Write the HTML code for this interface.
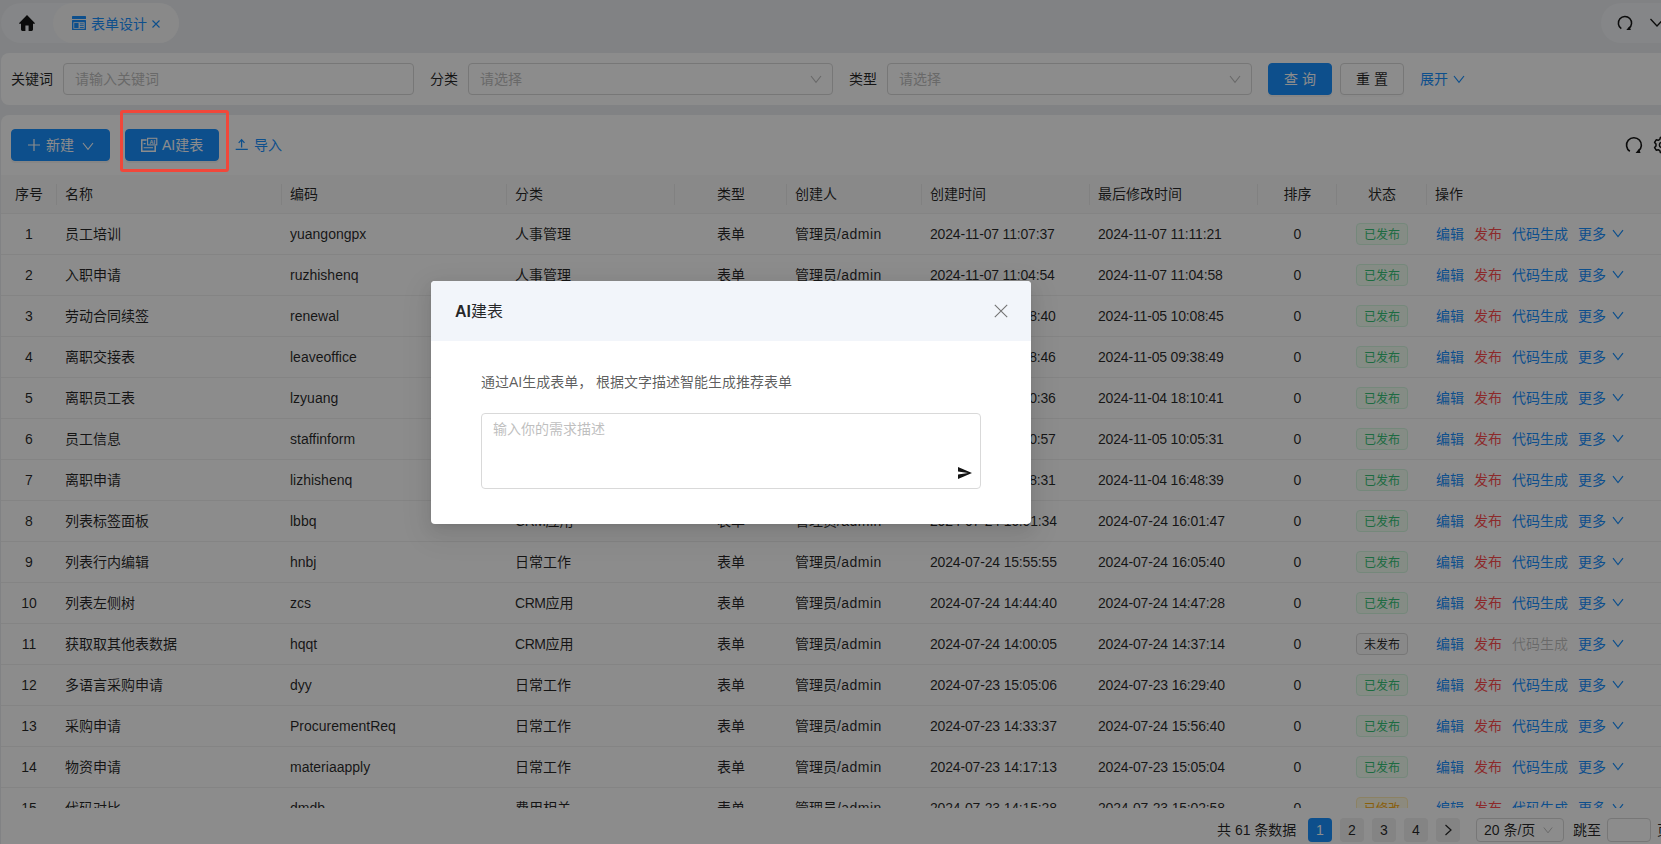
<!DOCTYPE html>
<html lang="zh-CN">
<head>
<meta charset="utf-8">
<title>表单设计</title>
<style>
*{box-sizing:border-box;margin:0;padding:0}
html,body{width:1661px;height:844px;overflow:hidden}
body{background:#ebedf0;font-family:"Liberation Sans","Noto Sans CJK SC",sans-serif;font-size:14px;color:rgba(0,0,0,.85);position:relative}
.abs{position:absolute}
/* tabs */
.tabs{left:1px;top:3px;width:178px;height:40px;border-radius:20px;background:#f2f4f7}
.tab-act{left:53px;top:3px;width:126px;height:40px;border-radius:20px;background:#f9f9f9}
.tab-txt{left:91px;top:4px;height:40px;line-height:41px;color:#1890ff;font-size:14px;white-space:nowrap}
.rpill{left:1601px;top:3px;width:100px;height:40px;border-radius:20px;background:#f2f4f7}
/* search panel */
.panel{background:#fff;border-radius:8px}
.sp{left:1px;top:53px;width:1700px;height:52px}
.lbl{top:63px;height:32px;line-height:32px;font-size:14px;color:rgba(0,0,0,.85);white-space:nowrap}
.inp{top:63px;height:32px;border:1px solid #d9d9d9;border-radius:4px;background:#fff;line-height:30px;padding-left:11px;color:#bfbfbf;font-size:14px;white-space:nowrap}
.btn{height:32px;border-radius:4px;line-height:30px;text-align:center;font-size:14px;white-space:nowrap}
.btn.pri{background:#1890ff;color:#fff;border:1px solid #1890ff;box-shadow:0 2px 0 rgba(0,0,0,.045)}
.btn.def{background:#fff;color:rgba(0,0,0,.85);border:1px solid #d9d9d9;box-shadow:0 2px 0 rgba(0,0,0,.015)}
.link{color:#1890ff}
/* table panel */
.tp{left:1px;top:115px;width:1700px;height:760px}
.tw{left:1px;top:175px;width:1691px;height:633px;overflow:hidden}
table{border-collapse:separate;border-spacing:0;table-layout:fixed;width:1691px}
th{height:39px;background:#fafafa;font-weight:normal;text-align:left;padding:0 8px 2px;border-bottom:1px solid #f0f0f0;position:relative;font-size:14px;color:rgba(0,0,0,.85);white-space:nowrap}
th:before{content:"";position:absolute;left:-1px;top:9px;height:21px;width:1px;background:rgba(0,0,0,.06)}
th:first-child:before{display:none}
td{height:41px;padding:0 8px;border-bottom:1px solid #f0f0f0;font-size:14px;color:rgba(0,0,0,.85);white-space:nowrap;overflow:hidden}
th.c,td.c{text-align:center}
td.z{padding-bottom:2px}
td.dt{letter-spacing:-.17px}
.ad{letter-spacing:.45px}
.crm{letter-spacing:-.45px}
.tag{display:inline-block;height:22px;line-height:20px;padding:1px 7px 0;font-size:12px;border-radius:4px;border:1px solid #d9d9d9;background:#fafafa;vertical-align:middle}
.tag.g{color:#36c377;background:#f2fff3;border-color:#d6f7e0}
.tag.w{color:#faad14;background:#fffbe6;border-color:#ffedb5}
.tag.d{color:rgba(0,0,0,.85)}
td.op{padding-left:9px;padding-bottom:2px}
td.op a{color:#1890ff;margin-right:10px}
td.op a.red{color:#ff4d4f}
td.op a.dis{color:rgba(0,0,0,.25)}
.cv{width:12px;height:12px;margin-left:6px;vertical-align:-1px;position:relative;top:-1px}
/* pagination */
.pg{top:818px;height:24px;line-height:24px;font-size:14px;white-space:nowrap}
.pi{top:818px;width:24px;height:24px;line-height:24px;text-align:center;border-radius:4px;background:#f0f0f0;color:rgba(0,0,0,.85);font-size:14px}
.pi.act{background:#1890ff;color:#fff}
/* mask & modal */
.mask{left:0;top:0;width:1661px;height:844px;background:rgba(0,0,0,.45)}
.redbox{left:120px;top:110px;width:109px;height:62px;border:3px solid #f1473a;border-radius:3px}
.modal{left:431px;top:281px;width:600px;height:243px;background:#fff;border-radius:4px;box-shadow:0 3px 6px -4px rgba(0,0,0,.12),0 6px 16px rgba(0,0,0,.08),0 9px 28px 8px rgba(0,0,0,.05);overflow:hidden}
.mh{left:0;top:0;width:600px;height:60px;background:#f2f5fa}
.mt{left:24px;top:0;height:60px;line-height:61px;font-size:16px;font-weight:normal;color:rgba(0,0,0,.85);white-space:nowrap}
.md{left:50px;top:90px;height:22px;line-height:22px;font-size:14px;color:rgba(0,0,0,.65);white-space:nowrap}
.ta{left:50px;top:132px;width:500px;height:76px;border:1px solid #d9d9d9;border-radius:4px;background:#fff;padding:4px 11px;line-height:22px;color:#bfbfbf;font-size:14px}
</style>
</head>
<body>
<!-- tab bar -->
<div class="abs tabs"></div>
<div class="abs tab-act"></div>
<svg class="abs" style="left:19px;top:15px" width="16" height="16" viewBox="0 0 16 16"><path d="M8 0 L0.2 8 Q-0.2 8.8 0.8 8.8 H2 V14.6 Q2 16 3.4 16 H6.4 V10.4 H9.6 V16 H12.6 Q14 16 14 14.6 V8.8 H15.2 Q16.2 8.8 15.8 8 Z" fill="#141414"/></svg>
<svg class="abs" style="left:72px;top:16px" width="14" height="14" viewBox="0 0 14 14"><rect x="0" y="0" width="14" height="3" rx=".6" fill="#1890ff"/><path d="M.6 4 H13.4 Q14 4 14 4.6 V13.4 Q14 14 13.4 14 H.6 Q0 14 0 13.4 V4.6 Q0 4 .6 4 Z M1.4 6.2 V12.7 H12.6 V6.2 Z" fill="#1890ff" fill-rule="evenodd"/><rect x="2.2" y="7.1" width="4.4" height="4.9" rx=".5" fill="#1890ff"/><rect x="7.8" y="7.4" width="4" height=".9" fill="#1890ff"/><rect x="7.8" y="9.2" width="4" height=".9" fill="#1890ff"/><rect x="7.8" y="11" width="4" height=".9" fill="#1890ff"/></svg>
<div class="abs tab-txt">表单设计</div>
<svg class="abs" style="left:152px;top:20px" width="8" height="8" viewBox="0 0 8 8"><path d="M.5 .5 L7.5 7.5 M7.5 .5 L.5 7.5" stroke="#1890ff" stroke-width="1.1" fill="none"/></svg>
<div class="abs rpill"></div>
<svg class="abs" style="left:1617px;top:15px" width="16" height="16" viewBox="0 0 16 16"><path d="M4.3 13.6 A6.6 6.6 0 1 1 11.9 13.4" fill="none" stroke="#141414" stroke-width="1.5"/><path d="M13.9 15.1 L9.3 15.1 L12.5 11.3 Z" fill="#141414"/></svg>
<svg class="abs" style="left:1650px;top:18px" width="14" height="10" viewBox="0 0 14 10"><path d="M.5 1 L7 8 L13.5 1" fill="none" stroke="#141414" stroke-width="1.3"/></svg>

<!-- search panel -->
<div class="abs panel sp"></div>
<div class="abs lbl" style="left:11px">关键词</div>
<div class="abs inp" style="left:63px;width:351px">请输入关键词</div>
<div class="abs lbl" style="left:430px">分类</div>
<div class="abs inp" style="left:468px;width:365px">请选择</div>
<svg class="abs" style="left:810px;top:73px" width="12" height="12" viewBox="0 0 12 12"><path d="M1 3 L6 9.4 L11 3" fill="none" stroke="#bfbfbf" stroke-width="1.1"/></svg>
<div class="abs lbl" style="left:849px">类型</div>
<div class="abs inp" style="left:887px;width:365px">请选择</div>
<svg class="abs" style="left:1229px;top:73px" width="12" height="12" viewBox="0 0 12 12"><path d="M1 3 L6 9.4 L11 3" fill="none" stroke="#bfbfbf" stroke-width="1.1"/></svg>
<div class="abs btn pri" style="left:1268px;top:63px;width:64px">查 询</div>
<div class="abs btn def" style="left:1340px;top:63px;width:64px">重 置</div>
<div class="abs lbl link" style="left:1420px">展开</div>
<svg class="abs" style="left:1453px;top:73px" width="12" height="12" viewBox="0 0 12 12"><path d="M1 3 L6 9.4 L11 3" fill="none" stroke="#1890ff" stroke-width="1.2"/></svg>

<!-- table panel -->
<div class="abs panel tp"></div>
<div class="abs btn pri" style="left:11px;top:129px;width:99px"></div>
<svg class="abs" style="left:28px;top:139px" width="12" height="12" viewBox="0 0 12 12"><path d="M6 0 V12 M0 6 H12" stroke="#fff" stroke-width="1.2" fill="none"/></svg>
<div class="abs" style="left:46px;top:129px;height:32px;line-height:32px;color:#fff;white-space:nowrap">新建</div>
<svg class="abs" style="left:82px;top:140px" width="12" height="12" viewBox="0 0 12 12"><path d="M1 3 L6 9.4 L11 3" fill="none" stroke="#fff" stroke-width="1.1"/></svg>
<div class="abs btn pri" style="left:125px;top:129px;width:94px"></div>
<svg class="abs" style="left:141px;top:137px" width="17" height="16" viewBox="0 0 17 16"><path d="M5.6 2.9 H.75 V14.2 H14.2 V8.6" fill="none" stroke="#fff" stroke-width="1.5"/><rect x="6.6" y="1.3" width="9.2" height="6.6" fill="none" stroke="#fff" stroke-width="1.1"/><path d="M2.6 6.6 H4.6 M2.6 10.7 H12" fill="none" stroke="#fff" stroke-width="1.1"/><text x="11.2" y="6.6" font-family="Liberation Sans,sans-serif" font-size="5.4" font-weight="bold" fill="#fff" text-anchor="middle">AI</text></svg>
<div class="abs" style="left:162px;top:129px;height:32px;line-height:32px;color:#fff;white-space:nowrap">AI建表</div>
<svg class="abs" style="left:235px;top:138px" width="14" height="13" viewBox="0 0 14 13"><path d="M6.6 9.5 V1.4 M3.7 4.8 L6.6 1.6 L9.5 4.8 M.7 11.4 H12.8" fill="none" stroke="#1890ff" stroke-width="1.25"/></svg>
<div class="abs link" style="left:254px;top:129px;height:32px;line-height:32px;white-space:nowrap">导入</div>
<svg class="abs" style="left:1625px;top:136px" width="18" height="18" viewBox="0 0 16 16"><path d="M4.3 13.6 A6.6 6.6 0 1 1 11.9 13.4" fill="none" stroke="#141414" stroke-width="1.45"/><path d="M13.8 15 L9.4 15 L12.5 11.4 Z" fill="#141414"/></svg>
<svg class="abs" style="left:1653px;top:136px" width="18" height="18" viewBox="0 0 18 18"><path d="M9 1.2 L10.6 1.4 L11.2 3.4 L12.8 4.3 L14.8 3.8 L16.4 6.4 L15 8 V10 L16.4 11.6 L14.8 14.2 L12.8 13.7 L11.2 14.6 L10.6 16.6 H7.4 L6.8 14.6 L5.2 13.7 L3.2 14.2 L1.6 11.6 L3 10 V8 L1.6 6.4 L3.2 3.8 L5.2 4.3 L6.8 3.4 L7.4 1.4 Z" fill="none" stroke="#141414" stroke-width="1.5" stroke-linejoin="round"/><circle cx="9" cy="9" r="2.6" fill="none" stroke="#141414" stroke-width="1.5"/></svg>

<div class="abs tw"><table>
<colgroup><col style="width:56px"><col style="width:225px"><col style="width:225px"><col style="width:168px"><col style="width:112px"><col style="width:135px"><col style="width:168px"><col style="width:168px"><col style="width:79px"><col style="width:90px"><col></colgroup>
<thead><tr><th class="c">序号</th><th>名称</th><th>编码</th><th>分类</th><th class="c">类型</th><th>创建人</th><th>创建时间</th><th>最后修改时间</th><th class="c">排序</th><th class="c">状态</th><th>操作</th></tr></thead>
<tbody>
<tr><td class="c">1</td><td class="z">员工培训</td><td>yuangongpx</td><td class="z">人事管理</td><td class="c z">表单</td><td class="z">管理员<span class="ad">/admin</span></td><td class="dt">2024-11-07 11:07:37</td><td class="dt">2024-11-07 11:11:21</td><td class="c">0</td><td class="c"><span class="tag g">已发布</span></td><td class="op"><a>编辑</a><a class="red">发布</a><a>代码生成</a><a class="more">更多<svg class="cv" viewBox="0 0 12 12"><path d="M1 3.2 L6 9.6 L11 3.2" fill="none" stroke="currentColor" stroke-width="1.2"/></svg></a></td></tr>
<tr><td class="c">2</td><td class="z">入职申请</td><td>ruzhishenq</td><td class="z">人事管理</td><td class="c z">表单</td><td class="z">管理员<span class="ad">/admin</span></td><td class="dt">2024-11-07 11:04:54</td><td class="dt">2024-11-07 11:04:58</td><td class="c">0</td><td class="c"><span class="tag g">已发布</span></td><td class="op"><a>编辑</a><a class="red">发布</a><a>代码生成</a><a class="more">更多<svg class="cv" viewBox="0 0 12 12"><path d="M1 3.2 L6 9.6 L11 3.2" fill="none" stroke="currentColor" stroke-width="1.2"/></svg></a></td></tr>
<tr><td class="c">3</td><td class="z">劳动合同续签</td><td>renewal</td><td class="z">人事管理</td><td class="c z">表单</td><td class="z">管理员<span class="ad">/admin</span></td><td class="dt">2024-11-05 10:08:40</td><td class="dt">2024-11-05 10:08:45</td><td class="c">0</td><td class="c"><span class="tag g">已发布</span></td><td class="op"><a>编辑</a><a class="red">发布</a><a>代码生成</a><a class="more">更多<svg class="cv" viewBox="0 0 12 12"><path d="M1 3.2 L6 9.6 L11 3.2" fill="none" stroke="currentColor" stroke-width="1.2"/></svg></a></td></tr>
<tr><td class="c">4</td><td class="z">离职交接表</td><td>leaveoffice</td><td class="z">人事管理</td><td class="c z">表单</td><td class="z">管理员<span class="ad">/admin</span></td><td class="dt">2024-11-05 09:38:46</td><td class="dt">2024-11-05 09:38:49</td><td class="c">0</td><td class="c"><span class="tag g">已发布</span></td><td class="op"><a>编辑</a><a class="red">发布</a><a>代码生成</a><a class="more">更多<svg class="cv" viewBox="0 0 12 12"><path d="M1 3.2 L6 9.6 L11 3.2" fill="none" stroke="currentColor" stroke-width="1.2"/></svg></a></td></tr>
<tr><td class="c">5</td><td class="z">离职员工表</td><td>lzyuang</td><td class="z">人事管理</td><td class="c z">表单</td><td class="z">管理员<span class="ad">/admin</span></td><td class="dt">2024-11-04 18:10:36</td><td class="dt">2024-11-04 18:10:41</td><td class="c">0</td><td class="c"><span class="tag g">已发布</span></td><td class="op"><a>编辑</a><a class="red">发布</a><a>代码生成</a><a class="more">更多<svg class="cv" viewBox="0 0 12 12"><path d="M1 3.2 L6 9.6 L11 3.2" fill="none" stroke="currentColor" stroke-width="1.2"/></svg></a></td></tr>
<tr><td class="c">6</td><td class="z">员工信息</td><td>staffinform</td><td class="z">人事管理</td><td class="c z">表单</td><td class="z">管理员<span class="ad">/admin</span></td><td class="dt">2024-11-04 17:50:57</td><td class="dt">2024-11-05 10:05:31</td><td class="c">0</td><td class="c"><span class="tag g">已发布</span></td><td class="op"><a>编辑</a><a class="red">发布</a><a>代码生成</a><a class="more">更多<svg class="cv" viewBox="0 0 12 12"><path d="M1 3.2 L6 9.6 L11 3.2" fill="none" stroke="currentColor" stroke-width="1.2"/></svg></a></td></tr>
<tr><td class="c">7</td><td class="z">离职申请</td><td>lizhishenq</td><td class="z">人事管理</td><td class="c z">表单</td><td class="z">管理员<span class="ad">/admin</span></td><td class="dt">2024-11-04 16:48:31</td><td class="dt">2024-11-04 16:48:39</td><td class="c">0</td><td class="c"><span class="tag g">已发布</span></td><td class="op"><a>编辑</a><a class="red">发布</a><a>代码生成</a><a class="more">更多<svg class="cv" viewBox="0 0 12 12"><path d="M1 3.2 L6 9.6 L11 3.2" fill="none" stroke="currentColor" stroke-width="1.2"/></svg></a></td></tr>
<tr><td class="c">8</td><td class="z">列表标签面板</td><td>lbbq</td><td class="z"><span class="crm">CRM</span>应用</td><td class="c z">表单</td><td class="z">管理员<span class="ad">/admin</span></td><td class="dt">2024-07-24 16:01:34</td><td class="dt">2024-07-24 16:01:47</td><td class="c">0</td><td class="c"><span class="tag g">已发布</span></td><td class="op"><a>编辑</a><a class="red">发布</a><a>代码生成</a><a class="more">更多<svg class="cv" viewBox="0 0 12 12"><path d="M1 3.2 L6 9.6 L11 3.2" fill="none" stroke="currentColor" stroke-width="1.2"/></svg></a></td></tr>
<tr><td class="c">9</td><td class="z">列表行内编辑</td><td>hnbj</td><td class="z">日常工作</td><td class="c z">表单</td><td class="z">管理员<span class="ad">/admin</span></td><td class="dt">2024-07-24 15:55:55</td><td class="dt">2024-07-24 16:05:40</td><td class="c">0</td><td class="c"><span class="tag g">已发布</span></td><td class="op"><a>编辑</a><a class="red">发布</a><a>代码生成</a><a class="more">更多<svg class="cv" viewBox="0 0 12 12"><path d="M1 3.2 L6 9.6 L11 3.2" fill="none" stroke="currentColor" stroke-width="1.2"/></svg></a></td></tr>
<tr><td class="c">10</td><td class="z">列表左侧树</td><td>zcs</td><td class="z"><span class="crm">CRM</span>应用</td><td class="c z">表单</td><td class="z">管理员<span class="ad">/admin</span></td><td class="dt">2024-07-24 14:44:40</td><td class="dt">2024-07-24 14:47:28</td><td class="c">0</td><td class="c"><span class="tag g">已发布</span></td><td class="op"><a>编辑</a><a class="red">发布</a><a>代码生成</a><a class="more">更多<svg class="cv" viewBox="0 0 12 12"><path d="M1 3.2 L6 9.6 L11 3.2" fill="none" stroke="currentColor" stroke-width="1.2"/></svg></a></td></tr>
<tr><td class="c">11</td><td class="z">获取取其他表数据</td><td>hqqt</td><td class="z"><span class="crm">CRM</span>应用</td><td class="c z">表单</td><td class="z">管理员<span class="ad">/admin</span></td><td class="dt">2024-07-24 14:00:05</td><td class="dt">2024-07-24 14:37:14</td><td class="c">0</td><td class="c"><span class="tag d">未发布</span></td><td class="op"><a>编辑</a><a class="red">发布</a><a class="dis">代码生成</a><a class="more">更多<svg class="cv" viewBox="0 0 12 12"><path d="M1 3.2 L6 9.6 L11 3.2" fill="none" stroke="currentColor" stroke-width="1.2"/></svg></a></td></tr>
<tr><td class="c">12</td><td class="z">多语言采购申请</td><td>dyy</td><td class="z">日常工作</td><td class="c z">表单</td><td class="z">管理员<span class="ad">/admin</span></td><td class="dt">2024-07-23 15:05:06</td><td class="dt">2024-07-23 16:29:40</td><td class="c">0</td><td class="c"><span class="tag g">已发布</span></td><td class="op"><a>编辑</a><a class="red">发布</a><a>代码生成</a><a class="more">更多<svg class="cv" viewBox="0 0 12 12"><path d="M1 3.2 L6 9.6 L11 3.2" fill="none" stroke="currentColor" stroke-width="1.2"/></svg></a></td></tr>
<tr><td class="c">13</td><td class="z">采购申请</td><td>ProcurementReq</td><td class="z">日常工作</td><td class="c z">表单</td><td class="z">管理员<span class="ad">/admin</span></td><td class="dt">2024-07-23 14:33:37</td><td class="dt">2024-07-24 15:56:40</td><td class="c">0</td><td class="c"><span class="tag g">已发布</span></td><td class="op"><a>编辑</a><a class="red">发布</a><a>代码生成</a><a class="more">更多<svg class="cv" viewBox="0 0 12 12"><path d="M1 3.2 L6 9.6 L11 3.2" fill="none" stroke="currentColor" stroke-width="1.2"/></svg></a></td></tr>
<tr><td class="c">14</td><td class="z">物资申请</td><td>materiaapply</td><td class="z">日常工作</td><td class="c z">表单</td><td class="z">管理员<span class="ad">/admin</span></td><td class="dt">2024-07-23 14:17:13</td><td class="dt">2024-07-23 15:05:04</td><td class="c">0</td><td class="c"><span class="tag g">已发布</span></td><td class="op"><a>编辑</a><a class="red">发布</a><a>代码生成</a><a class="more">更多<svg class="cv" viewBox="0 0 12 12"><path d="M1 3.2 L6 9.6 L11 3.2" fill="none" stroke="currentColor" stroke-width="1.2"/></svg></a></td></tr>
<tr><td class="c">15</td><td class="z">代码对比</td><td>dmdb</td><td class="z">费用相关</td><td class="c z">表单</td><td class="z">管理员<span class="ad">/admin</span></td><td class="dt">2024-07-23 14:15:28</td><td class="dt">2024-07-23 15:02:58</td><td class="c">0</td><td class="c"><span class="tag w">已修改</span></td><td class="op"><a>编辑</a><a class="red">发布</a><a>代码生成</a><a class="more">更多<svg class="cv" viewBox="0 0 12 12"><path d="M1 3.2 L6 9.6 L11 3.2" fill="none" stroke="currentColor" stroke-width="1.2"/></svg></a></td></tr></tbody></table></div>

<!-- pagination -->
<div class="abs pg" style="left:1217px">共 61 条数据</div>
<div class="abs pi act" style="left:1308px">1</div>
<div class="abs pi" style="left:1340px">2</div>
<div class="abs pi" style="left:1372px">3</div>
<div class="abs pi" style="left:1404px">4</div>
<div class="abs pi" style="left:1436px"><svg width="10" height="12" viewBox="0 0 10 12" style="vertical-align:-1px"><path d="M2.5 1 L8 6 L2.5 11" fill="none" stroke="rgba(0,0,0,.85)" stroke-width="1.2"/></svg></div>
<div class="abs" style="left:1476px;top:818px;width:88px;height:24px;border:1px solid #d9d9d9;border-radius:4px;background:#fff;line-height:22px;padding-left:7px;white-space:nowrap">20 条/页</div>
<svg class="abs" style="left:1543px;top:825px" width="10" height="10" viewBox="0 0 12 12"><path d="M1 3 L6 9.4 L11 3" fill="none" stroke="#bfbfbf" stroke-width="1.2"/></svg>
<div class="abs pg" style="left:1573px">跳至</div>
<div class="abs" style="left:1607px;top:818px;width:44px;height:24px;border:1px solid #d9d9d9;border-radius:4px;background:#fff"></div>
<div class="abs pg" style="left:1657px">页</div>

<!-- mask -->
<div class="abs mask"></div>
<div class="abs redbox"></div>

<!-- modal -->
<div class="abs modal">
  <div class="abs mh"></div>
  <div class="abs mt"><b>AI</b>建表</div>
  <svg class="abs" style="left:563px;top:23px" width="14" height="14" viewBox="0 0 14 14"><path d="M.8 .8 L13.2 13.2 M13.2 .8 L.8 13.2" stroke="#737373" stroke-width="1.1" fill="none"/></svg>
  <div class="abs md">通过AI生成表单， 根据文字描述智能生成推荐表单</div>
  <div class="abs ta">输入你的需求描述</div>
  <svg class="abs" style="left:527px;top:186px" width="14" height="12" viewBox="0 0 14 12"><path d="M0 0 L14 6 L0 12 L0 7.4 L10 6 L0 4.6 Z" fill="#141414"/></svg>
</div>
</body>
</html>
